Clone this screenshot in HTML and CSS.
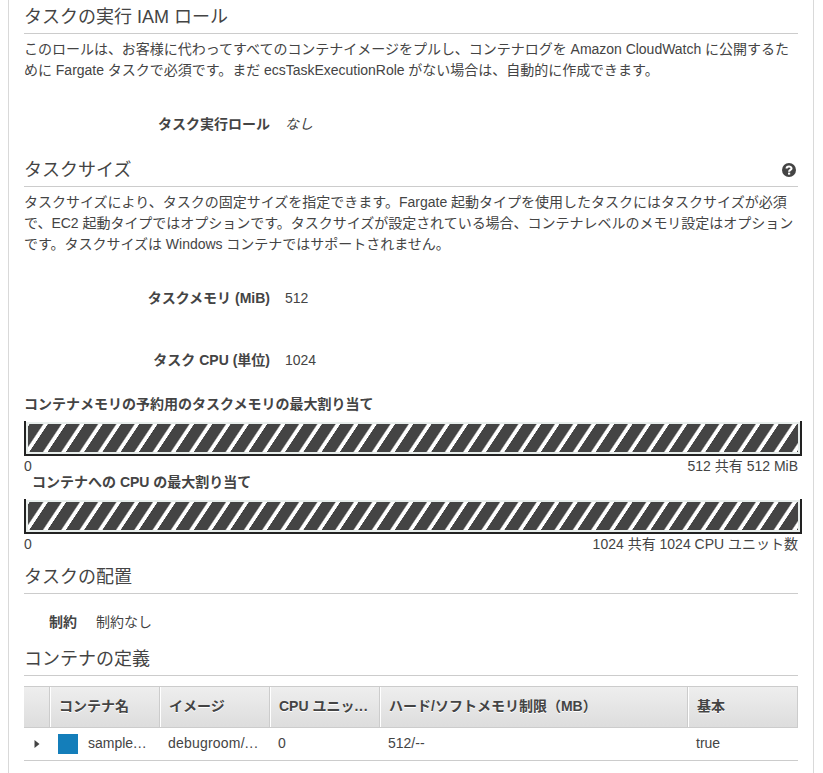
FILE: index.html
```html
<!DOCTYPE html>
<html lang="ja">
<head>
<meta charset="utf-8">
<title>タスク定義</title>
<link rel="stylesheet" href="styles.css">
</head>
<body>
<main class="panel">
  <section class="role">
    <h2>タスクの実行 IAM ロール</h2>
    <p class="desc"><span class="l1">このロールは、お客様に代わってすべてのコンテナイメージをプルし、コンテナログを Amazon CloudWatch に公開するた</span><span class="l2">めに Fargate タスクで必須です。まだ ecsTaskExecutionRole がない場合は、自動的に作成できます。</span></p>
    <dl class="field field-role"><dt>タスク実行ロール</dt><dd><i>なし</i></dd></dl>
  </section>
  <section class="size">
    <h2>タスクサイズ
      <svg class="help" viewBox="0 0 14 14" width="14" height="14"><circle cx="7" cy="7" r="7" fill="#444"/><path d="M4.6 5.4C4.6 2.9 9.5 2.9 9.5 5.4C9.5 7 7.1 6.8 7.1 8.7" fill="none" stroke="#fff" stroke-width="2.1"/><rect x="6" y="9.6" width="2.2" height="2" fill="#fff"/></svg>
    </h2>
    <p class="desc"><span class="l3">タスクサイズにより、タスクの固定サイズを指定できます。Fargate 起動タイプを使用したタスクにはタスクサイズが必須</span><span class="l4">で、EC2 起動タイプではオプションです。タスクサイズが設定されている場合、コンテナレベルのメモリ設定はオプション</span><span class="l5">です。タスクサイズは Windows コンテナではサポートされません。</span></p>
    <dl class="field field-mem"><dt>タスクメモリ (MiB)</dt><dd>512</dd></dl>
    <dl class="field field-cpu"><dt>タスク CPU (単位)</dt><dd>1024</dd></dl>
  </section>
  <section class="alloc">
    <h3>コンテナメモリの予約用のタスクメモリの最大割り当て</h3>
    <div class="meter">
      <svg width="770" height="28"><defs><linearGradient id="hatch" gradientUnits="userSpaceOnUse" x1="0" y1="0" x2="18.27" y2="0" spreadMethod="repeat" gradientTransform="translate(20.2 0) skewX(-33.7)"><stop offset="0" stop-color="#444"/><stop offset="0.69" stop-color="#444"/><stop offset="0.78" stop-color="#fff"/><stop offset="0.97" stop-color="#fff"/><stop offset="1" stop-color="#444"/></linearGradient></defs><rect width="770" height="28" fill="url(#hatch)"/></svg>
    </div>
    <div class="scale"><span>0</span><span>512 共有 512 MiB</span></div>
  </section>
  <section class="alloc">
    <h3 class="indent">コンテナへの CPU の最大割り当て</h3>
    <div class="meter"><svg width="770" height="28"><rect width="770" height="28" fill="url(#hatch)"/></svg></div>
    <div class="scale"><span>0</span><span>1024 共有 1024 CPU ユニット数</span></div>
  </section>
  <section class="place">
    <h2>タスクの配置</h2>
    <dl class="field field-con"><dt>制約</dt><dd>制約なし</dd></dl>
  </section>
  <section class="defs">
    <h2>コンテナの定義</h2>
    <table>
      <colgroup><col class="c0"><col class="c1"><col class="c1"><col class="c1"><col class="c4"><col class="c1"></colgroup>
      <thead><tr><th></th><th>コンテナ名</th><th>イメージ</th><th>CPU ユニッ<span class="dots">...</span></th><th>ハード/ソフトメモリ制限（MB）</th><th>基本</th></tr></thead>
      <tbody><tr>
        <td class="toggle"><svg width="6" height="8" viewBox="0 0 6 8"><path d="M0.5 0L5.5 4L0.5 8Z" fill="#444"/></svg></td>
        <td class="cell-name"><div class="name"><span class="swatch"></span><span class="label">sample<span class="dots">...</span></span></div></td>
        <td class="image">debugroom/<span class="dots">...</span></td><td>0</td><td>512/--</td><td>true</td>
      </tr></tbody>
    </table>
  </section>
</main>
</body>
</html>
```

FILE: styles.css
```css
* { box-sizing: border-box; }
body {
  margin: 0;
  background: #fff;
  color: #444;
  font: 14px/21px "Liberation Sans", "Noto Sans CJK JP", sans-serif;
}
.panel {
  width: 806px;
  height: 773px;
  margin-left: 8px;
  padding: 0 15px;
  border: solid #d9d9d9;
  border-width: 0 1px;
  overflow: hidden;
}
h2, h3, p, dl, dd { margin: 0; }
h2 {
  display: flex;
  justify-content: space-between;
  align-items: center;
  height: 34px;
  padding-top: 1px;
  border-bottom: 1px solid #ccc;
  font-size: 18px;
  font-weight: 400;
  line-height: 32px;
}
.help { margin-right: 2px; }
.desc { padding-top: 5px; }
.desc span { display: block; width: max-content; letter-spacing: -0.02px; white-space: nowrap; }
.desc .l3 { letter-spacing: 0; }
.field { display: flex; line-height: 21px; white-space: nowrap; }
.field dt { width: 246px; text-align: right; font-weight: 700; }
.field dd { margin-left: 15px; }
.role { height: 153px; }
.field-role { padding-top: 33px; }
.size { height: 241px; }
.field-mem { padding-top: 33px; }
.field-cpu { padding-top: 41px; }
.alloc { height: 78px; }
h3 { height: 27px; font-size: 14px; line-height: 21px; white-space: nowrap; }
.indent { padding-left: 8px; }
.meter {
  width: 778px;
  height: 35px;
  padding: 3px 2px 2px;
  border: solid #222;
  border-width: 0 2px 2px;
  background: linear-gradient(#fff 1px, #e8eeec 1px);
}
.meter svg { display: block; }
.scale { display: flex; justify-content: space-between; line-height: 20px; }
.place { height: 88px; padding-top: 10px; }
.field-con { padding-top: 18px; }
.field-con dt { width: 53px; }
.field-con dd { margin-left: 19px; }
.defs { padding-top: 4px; }
table {
  width: 774px;
  margin-top: 10px;
  border-collapse: separate;
  border-spacing: 0;
  table-layout: fixed;
}
.c0 { width: 26px; }
.c1 { width: 110px; }
.c4 { width: 308px; }
th {
  height: 42px;
  padding: 0 0 1px 9px;
  border: solid #ccc;
  border-width: 1px 1px 1px 0;
  background: linear-gradient(#eee, #ddd);
  box-shadow: inset 1px 0 #fff;
  text-align: left;
  text-shadow: 0 1px #fff;
  white-space: nowrap;
}
th:first-child { box-shadow: none; }
td {
  height: 33px;
  padding: 0 0 2px 8px;
  border-bottom: 1px solid #ccc;
  line-height: 20px;
  white-space: nowrap;
}
.dots { letter-spacing: 0.7px; }
.image { letter-spacing: 0.2px; }
.toggle { padding: 0 0 1px 10px; }
.toggle svg { display: block; }
.cell-name { padding-bottom: 1px; }
.name { display: flex; align-items: center; gap: 10px; height: 20px; }
.label { padding-bottom: 2px; }
.swatch { width: 20px; height: 20px; background: #147eba; }
```
